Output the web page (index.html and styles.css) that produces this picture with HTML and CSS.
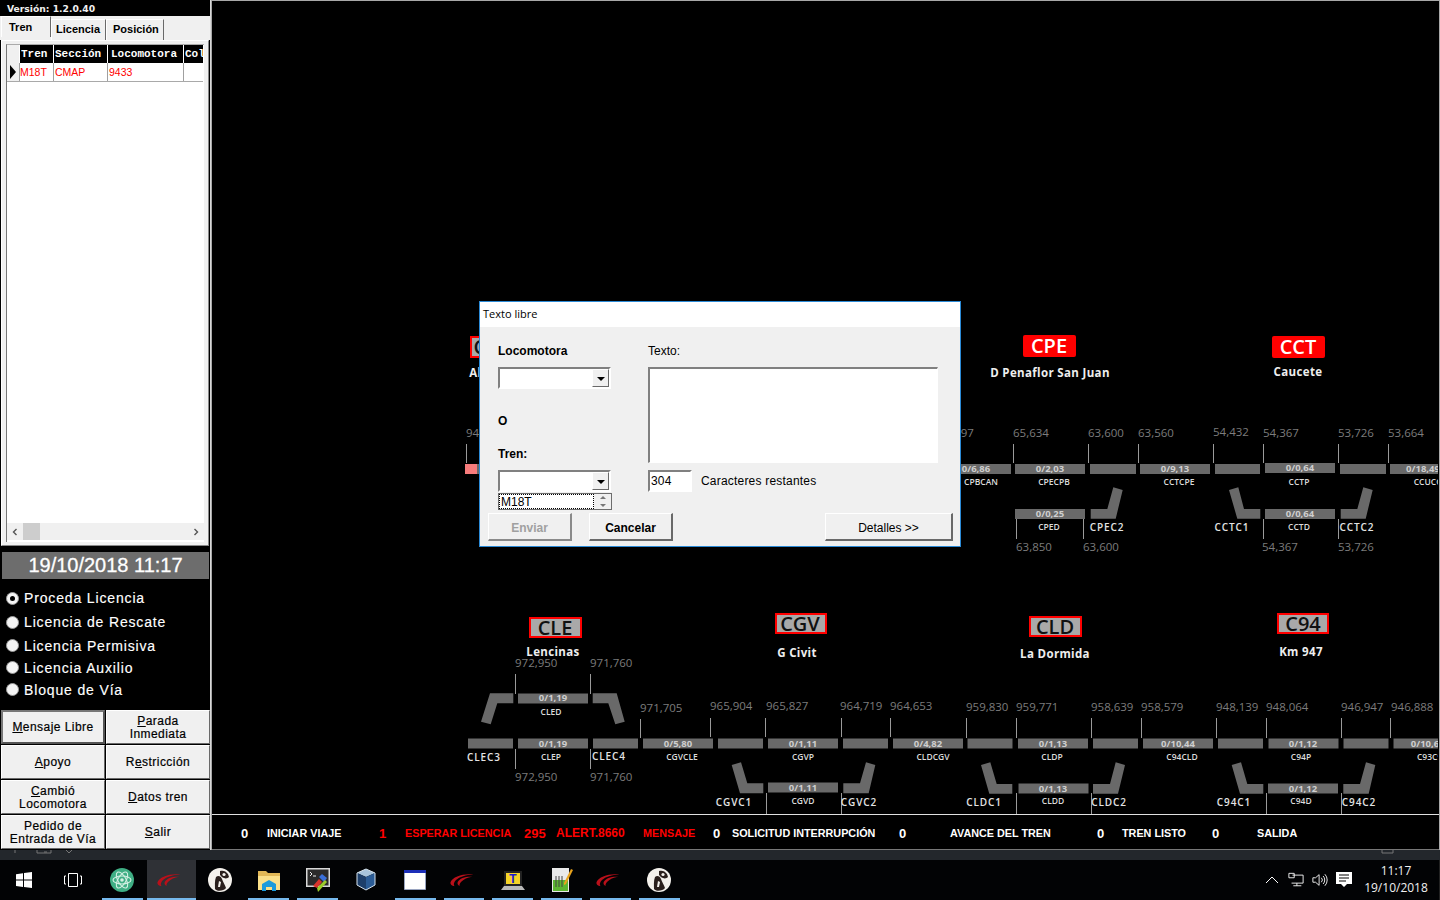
FILE: index.html
```html
<!DOCTYPE html>
<html lang="es">
<head>
<meta charset="utf-8">
<title>Texto libre</title>
<link rel="stylesheet" href="styles.css">
</head>
<body>
<div class="app">
  <div class="top">
    <aside class="sidebar">
      <div class="version">Versión: 1.2.0.40</div>
      <div class="tabs">
        <div class="tab tab-active">Tren</div>
        <div class="tab">Licencia</div>
        <div class="tab">Posición</div>
      </div>
      <div class="tabpanel">
        <div class="grid">
          <div class="grid-row grid-head">
            <div class="cell c0"></div><div class="cell c1">Tren</div><div class="cell c2">Sección</div><div class="cell c3">Locomotora</div><div class="cell c4">Col</div>
          </div>
          <div class="grid-row grid-data">
            <div class="cell c0"><span class="row-arrow"></span></div><div class="cell c1">M18T</div><div class="cell c2">CMAP</div><div class="cell c3">9433</div><div class="cell c4"></div>
          </div>
          <div class="grid-fill"></div>
          <div class="hscroll">
            <svg class="chev" viewBox="0 0 8 8"><path d="M5.500 1 2.500 4l3 3" /></svg>
            <div class="thumb"></div>
            <div class="hscroll-space"></div>
            <svg class="chev" viewBox="0 0 8 8"><path d="M2.500 1l3 3-3 3" /></svg>
          </div>
        </div>
      </div>
      <div class="datebar">19/10/2018 11:17</div>
      <div class="radios">
        <div class="radio"><span class="dot dot-on"></span>Proceda Licencia</div>
        <div class="radio"><span class="dot"></span>Licencia de Rescate</div>
        <div class="radio"><span class="dot"></span>Licencia Permisiva</div>
        <div class="radio"><span class="dot"></span>Licencia Auxilio</div>
        <div class="radio"><span class="dot"></span>Bloque de Vía</div>
      </div>
      <div class="buttons">
        <div class="sbtn sbtn-focus"><span><u>M</u>ensaje Libre</span></div>
        <div class="sbtn"><span><u>P</u>arada<br>Inmediata</span></div>
        <div class="sbtn"><span><u>A</u>poyo</span></div>
        <div class="sbtn"><span>R<u>e</u>stricción</span></div>
        <div class="sbtn"><span><u>C</u>ambió<br>Locomotora</span></div>
        <div class="sbtn"><span><u>D</u>atos tren</span></div>
        <div class="sbtn"><span>Pedido de<br>Entrada de Vía</span></div>
        <div class="sbtn"><span><u>S</u>alir</span></div>
      </div>
    </aside>

    <main class="main">
      <svg class="diagram" viewBox="212 1 1226 813">
        <!-- station badges and names -->
        <rect class="badge-off" x="471" y="337" width="51" height="20"/><text class="badge-t-off" x="492" y="354">CAL</text>
        <text class="name" x="497" y="377">Albardon</text>
        <rect class="badge-on" x="1023" y="335" width="53" height="22" rx="2"/><text class="badge-t-on" x="1049" y="353">CPE</text>
        <text class="name" x="1050" y="377">D Penaflor San Juan</text>
        <rect class="badge-on" x="1272" y="336" width="53" height="22" rx="2"/><text class="badge-t-on" x="1298" y="354">CCT</text>
        <text class="name" x="1298" y="376">Caucete</text>
        <rect class="badge-off" x="530" y="618" width="51" height="19"/><text class="badge-t-off" x="555" y="635">CLE</text>
        <text class="name" x="553" y="656">Lencinas</text>
        <rect class="badge-off" x="776" y="614" width="50" height="19"/><text class="badge-t-off" x="800" y="631">CGV</text>
        <text class="name" x="797" y="657">G Civit</text>
        <rect class="badge-off" x="1030" y="617" width="51" height="19"/><text class="badge-t-off" x="1055" y="634">CLD</text>
        <text class="name" x="1055" y="658">La Dormida</text>
        <rect class="badge-off" x="1278" y="614" width="50" height="19"/><text class="badge-t-off" x="1303" y="631">C94</text>
        <text class="name" x="1301" y="656">Km 947</text>

        <!-- km marks -->
        <g class="km">
          <text x="466" y="437">94</text><text x="938" y="437">65,697</text>
          <text x="1013" y="437">65,634</text><text x="1088" y="437">63,600</text><text x="1138" y="437">63,560</text>
          <text x="1213" y="436">54,432</text><text x="1263" y="437">54,367</text><text x="1338" y="437">53,726</text><text x="1388" y="437">53,664</text>
          <text x="1016" y="551">63,850</text><text x="1083" y="551">63,600</text><text x="1262" y="551">54,367</text><text x="1338" y="551">53,726</text>
          <text x="515" y="667">972,950</text><text x="590" y="667">971,760</text>
          <text x="640" y="712">971,705</text><text x="710" y="710">965,904</text><text x="766" y="710">965,827</text><text x="840" y="710">964,719</text><text x="890" y="710">964,653</text>
          <text x="515" y="781">972,950</text><text x="590" y="781">971,760</text>
          <text x="966" y="711">959,830</text><text x="1016" y="711">959,771</text><text x="1091" y="711">958,639</text><text x="1141" y="711">958,579</text>
          <text x="1216" y="711">948,139</text><text x="1266" y="711">948,064</text><text x="1341" y="711">946,947</text><text x="1391" y="711">946,888</text>
        </g>

        <!-- ticks -->
        <path class="tick" d="M466.500 444v19M1013.500 444v19M1088.500 444v19M1138.500 444v19M1213.500 444v19M1263.500 444v19M1338.500 444v19M1388.500 444v19M1016.500 519v20M1083.500 519v20M1263.500 519v20M1338.500 519v20M515.500 674v20M590.500 674v20M515.500 749v20M590.500 749v20M640.500 719v19M710.500 718v19M765.500 718v19M841.500 718v19M890.500 718v19M766.500 793v21M841.500 793v21M966.500 718v20M1016.500 718v20M1091.500 718v20M1141.500 718v20M1216.500 718v20M1266.500 718v20M1341.500 718v20M1390.500 718v20M1016.500 793v21M1091.500 793v21M1266.500 793v21M1341.500 793v21"/>

        <!-- track segments -->
        <g class="bar">
          <rect x="465" y="464" width="120" height="10"/>
          <rect x="941" y="464" width="70" height="10"/><rect x="1015" y="464" width="70" height="10"/><rect x="1090" y="464" width="46" height="10"/><rect x="1140" y="464" width="70" height="10"/><rect x="1215" y="464" width="45" height="10"/><rect x="1265" y="463" width="70" height="10"/><rect x="1340" y="464" width="46" height="10"/><rect x="1390" y="464" width="70" height="10"/>
          <rect x="1015" y="509" width="70" height="10"/><rect x="1265" y="509" width="70" height="10"/>
          <polygon points="1090.700,509 1107.300,509 1113.300,487.300 1122.700,490 1115.700,518.700 1090.700,518.700"/>
          <polygon points="1229,490 1238.300,487.300 1244,509 1260.300,509 1260.300,518.700 1237.300,518.700"/>
          <polygon points="1340.700,509 1357.300,509 1363.300,487.300 1372.700,490 1365.700,518.700 1340.700,518.700"/>
          <polygon points="513.300,693.300 490,693.300 481,721.700 490.700,724.300 497.300,703.300 513.300,703.300"/>
          <polygon points="592.700,693.300 616.700,693.300 624.700,721.700 615.300,724.300 608.300,703.300 592.700,703.300"/>
          <rect x="518" y="693.500" width="70" height="10"/>
          <rect x="468" y="738.500" width="45" height="10"/><rect x="518" y="738.500" width="70" height="10"/><rect x="593" y="738.500" width="45" height="10"/><rect x="643" y="738.500" width="70" height="10"/><rect x="718" y="738.500" width="45" height="10"/><rect x="768" y="738.500" width="70" height="10"/><rect x="843" y="738.500" width="45" height="10"/><rect x="893" y="738.500" width="70" height="10"/><rect x="967.500" y="738.500" width="45" height="10"/><rect x="1018" y="738.500" width="70" height="10"/><rect x="1093" y="738.500" width="45" height="10"/><rect x="1143" y="738.500" width="70" height="10"/><rect x="1218" y="738.500" width="45" height="10"/><rect x="1268.500" y="738.500" width="70" height="10"/><rect x="1343.500" y="738.500" width="45" height="10"/><rect x="1393.500" y="738.500" width="70" height="10"/>
          <polygon points="731.700,765 741,762.300 747.300,783.300 763.300,783.300 763.300,793.300 740,793.300"/>
          <polygon points="843.300,783.300 860,783.300 866,762.300 875.300,765 868.700,793.300 843.300,793.300"/>
          <rect x="768" y="782.500" width="70" height="10"/>
          <polygon points="981,765 990.300,762.300 996.700,784 1012.300,784 1012.300,793.700 989.300,793.700"/>
          <polygon points="1093,784 1110,784 1115.700,762.300 1125,765 1118,793.700 1093,793.700"/>
          <rect x="1018.500" y="783.500" width="70" height="10"/>
          <polygon points="1231.700,765 1241,762.300 1247.300,784 1263.300,784 1263.300,793.700 1240,793.700"/>
          <polygon points="1343.300,784 1360,784 1366,762.300 1375.300,765 1368.700,793.700 1343.300,793.700"/>
          <rect x="1268" y="783.500" width="70" height="10"/>
        </g>
        <rect class="pink" x="465" y="464" width="12" height="10"/>

        <!-- occupation values -->
        <g class="seg">
          <text x="976" y="472">0/6,86</text><text x="1050" y="472">0/2,03</text><text x="1175" y="472">0/9,13</text><text x="1300" y="471">0/0,64</text><text x="1423" y="472">0/18,49</text>
          <text x="1050" y="517">0/0,25</text><text x="1300" y="517">0/0,64</text>
          <text x="553" y="701">0/1,19</text><text x="553" y="746.500">0/1,19</text><text x="678" y="746.500">0/5,80</text><text x="803" y="746.500">0/1,11</text><text x="928" y="746.500">0/4,82</text>
          <text x="803" y="790.500">0/1,11</text><text x="1053" y="746.500">0/1,13</text><text x="1178" y="746.500">0/10,44</text><text x="1303" y="746.500">0/1,12</text><text x="1425" y="746.500">0/10,6</text>
          <text x="1053" y="791.500">0/1,13</text><text x="1303" y="791.500">0/1,12</text>
        </g>

        <!-- small section names -->
        <g class="lbl">
          <text x="981" y="485">CPBCAN</text><text x="1054" y="485">CPECPB</text><text x="1179" y="485">CCTCPE</text><text x="1299" y="485">CCTP</text><text x="1430" y="485">CCUCCT</text>
          <text x="1049" y="530">CPED</text><text x="1299" y="530">CCTD</text>
          <text x="551" y="715">CLED</text><text x="551" y="760">CLEP</text><text x="682" y="760">CGVCLE</text><text x="803" y="760">CGVP</text><text x="933" y="760">CLDCGV</text>
          <text x="803" y="804">CGVD</text><text x="1052" y="760">CLDP</text><text x="1182" y="760">C94CLD</text><text x="1301" y="760">C94P</text><text x="1432" y="760">C93C94</text>
          <text x="1053" y="804">CLDD</text><text x="1301" y="804">C94D</text>
        </g>
        <g class="lbl-big">
          <text x="1107" y="531">CPEC2</text><text x="1232" y="531">CCTC1</text><text x="1357" y="531">CCTC2</text>
          <text x="484" y="761">CLEC3</text><text x="609" y="760">CLEC4</text>
          <text x="734" y="806">CGVC1</text><text x="859" y="806">CGVC2</text>
          <text x="984" y="806">CLDC1</text><text x="1109" y="806">CLDC2</text><text x="1234" y="806">C94C1</text><text x="1359" y="806">C94C2</text>
        </g>
      </svg>

      <div class="status">
        <span class="num">0</span><span>INICIAR VIAJE</span>
        <span class="alert num">1</span><span class="alert">ESPERAR LICENCIA</span>
        <span class="alert num">295</span><span class="alert wide-t">ALERT.8660</span><span class="alert">MENSAJE</span>
        <span class="num">0</span><span>SOLICITUD INTERRUPCIÓN</span>
        <span class="num">0</span><span>AVANCE DEL TREN</span>
        <span class="num">0</span><span>TREN LISTO</span>
        <span class="num">0</span><span>SALIDA</span>
      </div>
    </main>
  </div>

  <div class="strip">
    <svg class="strip-icons" viewBox="0 0 90 4"><path d="M15 0v3M37 0v3h14V0M44 2h3M66 0l3 3M72 0l-3 3"/></svg>
    <svg class="strip-doc" viewBox="0 0 16 4"><path d="M2 0v3h11V0"/></svg>
  </div>

  <footer class="taskbar">
    <div class="tb-sys">
      <svg class="ic" viewBox="0 0 20 20"><path class="white" d="M2 4.200 9 3.200v6.400H2zM10 3 18 2v7.600h-8zM2 10.500h7v6.400l-7-1zM10 10.500h8V18l-8-1.100z"/></svg>
    </div>
    <div class="tb-sys">
      <svg class="ic" viewBox="0 0 20 20"><path class="line" d="M5.500 3.500h9v13h-9zM3 6H1.500v8H3M17 6h1.500v8H17"/></svg>
    </div>
    <div class="tb-item on">
      <svg class="ic-l" viewBox="0 0 24 24"><circle cx="12" cy="12" r="12" fill="#3fae84"/><g fill="none" stroke="#d5f0e4" stroke-width="1.100"><ellipse cx="12" cy="12" rx="9" ry="4" transform="rotate(60 12 12)"/><ellipse cx="12" cy="12" rx="9" ry="4" transform="rotate(-60 12 12)"/><ellipse cx="12" cy="12" rx="9" ry="4"/></g><circle cx="12" cy="12" r="1.800" fill="#d5f0e4"/></svg>
    </div>
    <div class="tb-item on active">
      <svg class="ic-sw" viewBox="0 0 26 14"><use href="#swoosh"/></svg>
    </div>
    <div class="tb-item">
      <svg class="ic-l" viewBox="0 0 24 24"><use href="#tux"/></svg>
    </div>
    <div class="tb-item on">
      <svg class="ic-l" viewBox="0 0 24 24"><path fill="#e2b857" d="M1 3h8l2 2h12v17H1z"/><path fill="#fbe08a" d="M1 8h22v14H1z"/><path fill="#1d9bdc" d="M5 16l7-4 7 4v7h-4v-4H9v4H5z"/></svg>
    </div>
    <div class="tb-item on">
      <svg class="ic-l" viewBox="0 0 24 24"><path fill="#d8d8d8" d="M0 0h24v19H0z"/><path fill="#2b2b2b" d="M1.500 1.500h21v16h-21z"/><path stroke="#eee" fill="none" d="M4 4l2 2-2 2M7 8h3"/><path fill="#d9352c" d="M7 18l6-7 3 3-5 6z"/><path fill="#3a6fd8" d="M13 9l3-3 5 4-3 4z"/><path fill="#9ccc2a" d="M11 20l8-8 2 2-9 10z"/></svg>
    </div>
    <div class="tb-item">
      <svg class="ic-l" viewBox="0 0 24 24"><path fill="#a8c4dc" d="M12 1l9 4-9 4-9-4z"/><path fill="#1d3f6b" d="M3 5l9 4v13l-9-5z"/><path fill="#2b5c96" d="M21 5l-9 4v13l9-5z"/><path fill="none" stroke="#d7e4ef" d="M12 1l9 4v12l-9 5-9-5V5z"/></svg>
    </div>
    <div class="tb-item on">
      <svg class="ic-l" viewBox="0 0 24 24"><path fill="#fff" stroke="#9aa5c0" d="M1.500 2.500h21v19h-21z"/><path fill="#1c2fb8" d="M1 2h22v3H1z"/></svg>
    </div>
    <div class="tb-item on">
      <svg class="ic-sw" viewBox="0 0 26 14"><use href="#swoosh"/></svg>
    </div>
    <div class="tb-item on">
      <svg class="ic-l" viewBox="0 0 24 24"><path fill="#222" d="M3 3h18v15H3z"/><path fill="#f5d327" d="M5 5h14v11H5z"/><path fill="#b9b9b9" d="M3 18h18l3 4H0z"/><text class="tee" x="12" y="14.500">T</text></svg>
    </div>
    <div class="tb-item on">
      <svg class="ic-l" viewBox="0 0 24 24"><path fill="#e9e9e9" d="M2 0h17v24H2z"/><path fill="#5cb531" d="M3 12h15v11H3z"/><path fill="none" stroke="#444" d="M6 8v11M9 8v11M12 8v11"/><path fill="#e8a21c" d="M14 15l7-14 2 1-7 14-2 1z"/></svg>
    </div>
    <div class="tb-item on">
      <svg class="ic-sw" viewBox="0 0 26 14"><use href="#swoosh"/></svg>
    </div>
    <div class="tb-item on">
      <svg class="ic-l" viewBox="0 0 24 24"><use href="#tux"/></svg>
    </div>

    <div class="tray">
      <svg class="tr-ic" viewBox="0 0 16 16"><path class="line" d="M2 11l6-6 6 6"/></svg>
      <svg class="tr-ic" viewBox="0 0 18 16"><path class="line" d="M5 2.500h12v9H4M10 11.500v3M6 14.500h9M1 .5h6v5H1z"/></svg>
      <svg class="tr-ic" viewBox="0 0 18 16"><path class="line" d="M1 5.500h3l4-3.500v12l-4-3.500H1zM10.500 5.500a3.500 3.500 0 0 1 0 5M12.500 3.500a6.500 6.500 0 0 1 0 9M14.500 1.500a9.500 9.500 0 0 1 0 13"/></svg>
      <svg class="tr-ic" viewBox="0 0 16 16"><path class="white" d="M0 0h16v12h-5l-3 3-3-3H0z"/><path class="cut" d="M3 3h10M3 6h10M3 9h7"/></svg>
      <div class="clock">11:17<br>19/10/2018</div>
    </div>
  </footer>

  <div class="dialog">
    <div class="dlg-title">Texto libre</div>
    <div class="dlg-body">
      <div class="dlg-cols">
        <div class="dlg-left">
          <div class="flabel bold">Locomotora</div>
          <div class="combo"><span class="combo-btn"><i class="down"></i></span></div>
          <div class="flabel bold gap-o">O</div>
          <div class="flabel bold gap-t">Tren:</div>
          <div class="combo"><span class="combo-btn"><i class="down"></i></span></div>
          <div class="spin">
            <span class="spin-text">M18T</span>
            <span class="spin-btns"><i class="mini-up"></i><i class="mini-down"></i></span>
          </div>
        </div>
        <div class="dlg-right">
          <div class="flabel">Texto:</div>
          <div class="textarea"></div>
          <div class="count-row">
            <div class="count">304</div>
            <div class="count-lbl">Caracteres restantes</div>
          </div>
        </div>
      </div>
      <div class="dlg-btns">
        <div class="dbtn bold disabled">Enviar</div>
        <div class="dbtn bold">Cancelar</div>
        <div class="dbtn wide">Detalles &gt;&gt;</div>
      </div>
    </div>
  </div>
</div>

<svg class="defs" width="0" height="0">
  <symbol id="swoosh" viewBox="0 0 26 14">
    <path fill="#b9101a" d="M25.500 1C15-.5 3 3 .5 9.500 0 12 2 13.500 5 13.800 3.500 12 4 9.500 6.500 7 10.500 3.500 17 1.500 25.500 1z"/>
    <path fill="#b9101a" d="M24 3.500C17 3 10.500 5 8.500 9c-1 2 0 3.800 2 4.500-.5-1.500 0-3.300 2-5 2.500-2.300 6-4 11.500-5z"/>
  </symbol>
  <symbol id="tux" viewBox="0 0 24 24">
    <circle cx="12" cy="12" r="12" fill="#f4f1ec"/>
    <path fill="#2a1f1c" d="M8 9c2-2 5-1 6 2 1 3 3 6 4 9-2 3-9 4-11 1 0-4-.5-8 1-12z"/>
    <path fill="#2a1f1c" d="M12 3c3-1 6 0 8 3l1 3c-1 1-3 2-5 1-2-.5-3-2-4-3z"/>
    <circle cx="16" cy="6.500" r="1.600" fill="#f4f1ec"/>
    <path fill="#f4f1ec" d="M11 13l2 1-1 5h-2z"/>
  </symbol>
</svg>
</body>
</html>
```

FILE: styles.css
```css
* { box-sizing: border-box; }
html, body { margin: 0; padding: 0; height: 100%; background: #000; overflow: hidden; }
body { font-family: "Liberation Sans", Arial, sans-serif; }

.app { position: relative; width: 1440px; height: 900px; display: flex; flex-direction: column; }
.top { display: flex; height: 850px; }

/* Sidebar */
.sidebar { width: 211px; height: 850px; border-right: 1px solid #d8d8d8; background: #000; display: flex; flex-direction: column; }
.version { height: 16px; padding: 1px 0 0 7px; color: #f0f0f0; font: bold 9.200px/16px "DejaVu Sans", sans-serif; }
.tabs { height: 24px; background: #f0f0f0; display: flex; align-items: flex-start; padding: 3px 0 0 1px; }
.tab { height: 21px; padding: 2px 0 0 4px; font: bold 11px/15px "Liberation Sans", sans-serif; color: #000; border-right: 1px solid #696969; border-top: 1px solid #fff; border-left: 1px solid #fff; background: #f0f0f0; }
.tab:nth-child(2) { width: 55px; }
.tab:nth-child(3) { width: 58px; padding-left: 6px; }
.tab-active { width: 50px; height: 21px; margin-top: -3px; padding: 3px 0 0 7px; }
.tabpanel { height: 506px; background: #f0f0f0; padding: 3px 4px 3px 4px; border: 1px solid #fff; border-right-color: #888; border-bottom-color: #888; width: 208px; margin-left: 1px; }
.grid { height: 498px; background: #fff; border-left: 1px solid #777; border-top: 1px solid #aaa; display: flex; flex-direction: column; }
.grid-row { display: flex; width: 196px; }
.grid-head { height: 18px; background: #000; color: #fff; font: bold 11px/19px "Liberation Mono", monospace; }
.grid-data { height: 19px; color: #f00; font: 10.500px/18px "Liberation Sans", sans-serif; border-bottom: 1px solid #a9a9a9; }
.cell { overflow: hidden; white-space: nowrap; border-right: 1px solid #a0a0a0; padding-left: 1px; }
.grid-head .cell { border-right-color: #fff; border-left: 1px solid #000; padding-left: 0; }
.c0 { width: 13px; padding: 0; background: #f0f0f0; display: flex; align-items: center; justify-content: center; }
.grid-head .c0 { border-left: 0; }
.c1 { width: 34px; }
.grid-data .c1 { padding-left: 0; }
.c2 { width: 54px; }
.c3 { width: 76px; }
.grid-head .c3 { padding-left: 2px; }
.c4 { width: 19px; }
.grid-row .c4 { border-right: 0; }
.row-arrow { width: 0; height: 0; border-left: 6px solid #000; border-top: 7px solid transparent; border-bottom: 7px solid transparent; }
.grid-fill { flex: 1; }
.hscroll { height: 17px; background: #f0f0f0; display: flex; align-items: center; margin-bottom: 2px; }
.chev { width: 8px; height: 8px; margin: 0 4px; fill: none; stroke: #555; stroke-width: 1.400; }
.thumb { width: 17px; height: 17px; background: #cdcdcd; }
.hscroll-space { flex: 1; }

.datebar { height: 27px; margin: 6px 0 0 2px; width: 207px; background: #6d6d6d; color: #fff; text-align: center; font: 20px/27px "Liberation Sans", sans-serif; -webkit-text-stroke: .3px #fff; }
.radios { padding: 8px 0 0 6px; height: 131px; }
.radio { height: 22px; display: flex; align-items: center; gap: 6px; color: #fff; font: 14px/22px "Liberation Sans", sans-serif; letter-spacing: .85px; -webkit-text-stroke: .15px #fff; }
.radio:nth-child(-n+2) { margin-bottom: 2px; }
.radio:nth-child(n+3) .dot { margin-top: -2px; }
.dot { width: 13px; height: 13px; border-radius: 50%; background: #f4f4f4; border: 1px solid #9a9a9a; display: flex; align-items: center; justify-content: center; }
.dot-on::after { content: ""; width: 5px; height: 5px; border-radius: 50%; background: #000; }
.radio .dot { margin-right: -1px; }

.buttons { display: grid; grid-template-columns: 104px 104px; grid-auto-rows: 34px; gap: 1px; padding-left: 1px; }
.sbtn { display: flex; align-items: center; justify-content: center; padding-top: 1px; text-align: center; background: #f0f0f0; border: 1px solid; border-color: #fff #696969 #696969 #fff; color: #000; font: 12px/13px "Liberation Sans", sans-serif; letter-spacing: .45px; -webkit-text-stroke: .2px #000; }
.sbtn-focus { border: 2px solid; border-color: #777 #555 #555 #777; }

/* Main canvas */
.main { width: 1229px; height: 850px; border: 1px solid #a8a8a8; border-bottom: 0; display: flex; flex-direction: column; background: #000; }
.diagram { display: block; width: 1226px; height: 813px; flex: none; overflow: hidden; font-family: "Open Sans", sans-serif; }
.km { fill: #7c7c7c; font-size: 11.500px; }
.tick { stroke: #9a9a9a; stroke-width: 1; fill: none; }
.bar { fill: #696969; }
.pink { fill: #f77c7c; }
.seg { fill: #cfcfcf; font-size: 9.500px; font-weight: 700; text-anchor: middle; }
.lbl { fill: #dcdcdc; font-size: 8.500px; font-weight: 600; text-anchor: middle; }
.lbl-big { fill: #e4e4e4; font-size: 10px; font-weight: 600; letter-spacing: .9px; text-anchor: middle; }
.name { fill: #eee; font-size: 11.500px; font-weight: 700; text-anchor: middle; letter-spacing: .35px; }
.badge-on { fill: #f00; }
.badge-off { fill: #a9a9a9; stroke: #f00; stroke-width: 2; }
.badge-t-on { fill: #fff; font-size: 20px; font-weight: 600; text-anchor: middle; }
.badge-t-off { fill: #111; font-size: 20px; font-weight: 600; text-anchor: middle; }

.status { height: 36px; border-top: 1px solid #e0e0e0; border-bottom: 1px solid #777; padding: 3px 0 0 29px; display: grid; grid-template-columns: 26px 112px 26px 119px 32px 87px 70px 19px 167px 51px 147px 25px 90px 45px 1fr; align-items: center; color: #fff; font: bold 10.800px/31px "Liberation Sans", sans-serif; white-space: nowrap; }
.status .alert { color: #f00; }
.status .num { font-size: 13px; }
.status .wide-t { font-size: 12px; }

/* Taskbar */
.strip { height: 10px; background: #23272c; display: flex; justify-content: space-between; }
.strip-icons { width: 90px; height: 4px; fill: none; stroke: #777; }
.strip-doc { width: 16px; height: 4px; margin-right: 44px; fill: none; stroke: #777; }
.taskbar { height: 40px; background: #020305; display: flex; color: #fff; }
.tb-sys { width: 48px; height: 40px; display: flex; align-items: center; justify-content: center; }
.tb-sys:nth-child(2) { width: 50px; }
.ic { width: 20px; height: 20px; }
.white { fill: #fff; }
.line { fill: none; stroke: #fff; stroke-width: 1; }
.cut { stroke: #000; stroke-width: 1; fill: none; }
.tb-item { position: relative; width: 48.800px; height: 40px; display: flex; align-items: center; justify-content: center; }
.tb-item.on::after { content: ""; position: absolute; left: 4px; right: 4px; bottom: 0; height: 2px; background: #76b9ed; }
.tb-item.active { background: #2f3136; }
.tb-item.active::after { left: 0; right: 0; }
.ic-l { width: 24px; height: 24px; }
.ic-sw { width: 24px; height: 14px; margin-left: -4px; }
.tee { fill: #1a1ad0; font: bold 12px "Liberation Sans", sans-serif; text-anchor: middle; }
.tray { margin-left: auto; display: flex; align-items: center; gap: 8px; padding-right: 7px; border-right: 1px solid #222; }
.tr-ic { width: 16px; height: 16px; }
.clock { width: 72px; margin-top: -2px; text-align: center; font: 12px/17px "Open Sans", sans-serif; color: #f0f0f0; }
.defs { position: absolute; }

/* Dialog */
.dialog { position: absolute; left: 479px; top: 301px; width: 482px; height: 246px; background: #f0f0f0; border: 1px solid #2b8ad6; }
.dlg-title { height: 25px; background: #fff; padding-left: 3px; color: #000; font: 11px/24px "Open Sans", sans-serif; }
.dlg-body { padding: 16px 7px 0 8px; }
.dlg-cols { display: flex; gap: 36px; padding-left: 10px; height: 167px; }
.dlg-left { width: 114px; }
.dlg-right { width: 290px; }
.flabel { height: 16px; color: #000; font: 12px/16px "Liberation Sans", sans-serif; }
.flabel.bold { font-weight: bold; }
.gap-o { margin-top: 24px; }
.gap-t { margin-top: 17px; }
.combo { position: relative; width: 113px; height: 22px; margin-top: 8px; background: #fff; border: 2px solid; border-color: #808080 #fff #fff #808080; }
.combo-btn { position: absolute; right: 0; top: 0; width: 17px; height: 18px; background: #f0f0f0; border: 1px solid; border-color: #fff #696969 #696969 #fff; display: flex; align-items: center; justify-content: center; padding-top: 1px; }
.down { width: 0; height: 0; border-top: 4px solid #000; border-left: 4px solid transparent; border-right: 4px solid transparent; }
.spin { display: flex; width: 114px; height: 17px; margin-top: 1px; border: 1px solid #6d6d6d; background: #fff; }
.spin-text { flex: 1; border: 1px dotted #000; padding-left: 1px; font: 12px/14px "Liberation Sans", sans-serif; color: #000; overflow: hidden; }
.spin-btns { width: 17px; background: #f0f0f0; display: flex; flex-direction: column; align-items: center; justify-content: space-around; }
.mini-up { width: 0; height: 0; border-bottom: 3px solid #777; border-left: 3px solid transparent; border-right: 3px solid transparent; }
.mini-down { width: 0; height: 0; border-top: 3px solid #777; border-left: 3px solid transparent; border-right: 3px solid transparent; }
.textarea { height: 96px; margin-top: 8px; background: #fff; border: 1px solid; border-width: 2px 1px 1px 2px; border-color: #808080 #fff #fff #808080; }
.count-row { display: flex; align-items: center; gap: 9px; margin-top: 7px; }
.count { width: 44px; height: 22px; padding-left: 1px; background: #fff; border: 2px solid; border-color: #808080 #fff #fff #808080; font: 12px/18px "Liberation Sans", sans-serif; color: #000; letter-spacing: .2px; }
.count-lbl { font: 12px/18px "Liberation Sans", sans-serif; color: #000; letter-spacing: .2px; }
.dlg-btns { display: flex; gap: 17px; margin-top: 3px; }
.dbtn { width: 84px; height: 28px; background: #f0f0f0; border: 1px solid; border-width: 1px 2px 2px 1px; border-color: #fff #696969 #696969 #fff; text-align: center; font-size: 12px; line-height: 28px; color: #000; }
.dbtn.bold { font-weight: bold; }
.dbtn.disabled { color: #a0a0a0; border-color: #fff #8a8a8a #8a8a8a #fff; }
.wide { width: 128px; margin-left: auto; }
```
